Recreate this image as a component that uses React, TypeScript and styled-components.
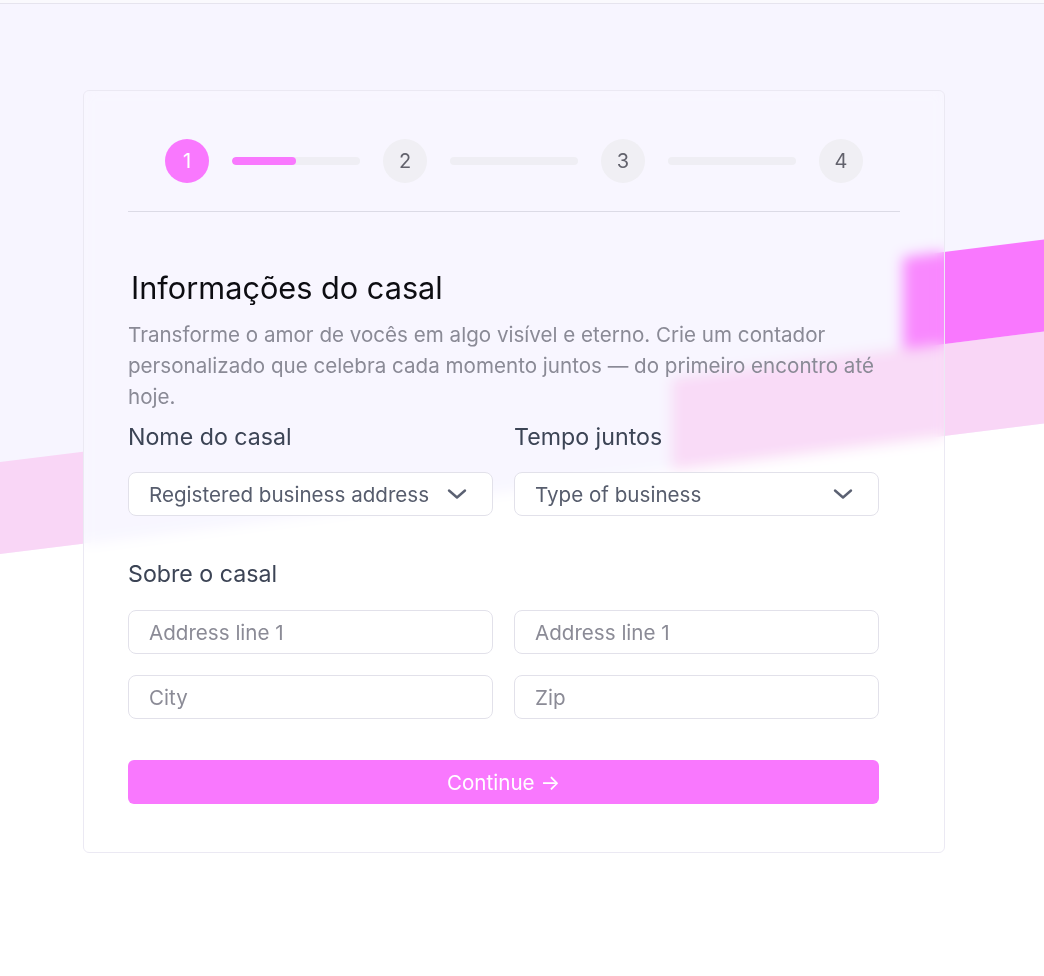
import React from "react";
import styled, { createGlobalStyle } from "styled-components";

const Global = createGlobalStyle`
  html, body { margin: 0; padding: 0; background: #ffffff; }
  body { font-family: Inter, "Noto Sans", sans-serif; }
  * { box-sizing: border-box; }
`;

const Page = styled.div`
  position: relative;
  width: 1044px;
  height: 976px;
  overflow: hidden;
`;

const Backdrop = styled.svg`
  position: absolute;
  inset: 0;
  width: 1044px;
  height: 976px;
  z-index: 0;
`;

const TopBar = styled.div`
  position: relative;
  z-index: 1;
  height: 4px;
  background: #faf9fd;
  border-bottom: 1px solid #e6e4ee;
`;

const Main = styled.main`
  position: relative;
  z-index: 1;
  display: flex;
  justify-content: flex-start;
  padding: 86px 0 0 83px;
`;

const Card = styled.section`
  width: 862px;
  height: 763px;
  border: 1px solid #ebe9f3;
  border-radius: 6px;
  background: rgba(255, 255, 255, 0.12);
  backdrop-filter: blur(7px);
  padding: 48px 44px 0 44px;
  display: flex;
  flex-direction: column;
`;

const Stepper = styled.div`
  display: flex;
  align-items: center;
  justify-content: center;
  gap: 23px;
  padding-bottom: 28px;
  border-bottom: 1px solid #dcdbe6;
`;

const StepDot = styled.div<{ $active?: boolean }>`
  width: 44px;
  height: 44px;
  border-radius: 50%;
  display: flex;
  align-items: center;
  justify-content: center;
  font-size: 20px;
  background: ${(p) => (p.$active ? "#f978fe" : "#f0eff4")};
  color: ${(p) => (p.$active ? "#ffffff" : "#62626c")};
`;

const Track = styled.div`
  width: 128px;
  height: 8px;
  border-radius: 4px;
  background: #efeef4;
  overflow: hidden;
`;

const Fill = styled.div`
  height: 100%;
  border-radius: 4px;
  background: #f978fe;
`;

const Title = styled.h1`
  margin: 58px 0 0 3px;
  font-size: 30.7px;
  line-height: 36px;
  font-weight: 400;
  color: #0d0d12;
`;

const Desc = styled.p`
  margin: 13px 0 0 0;
  font-size: 20.6px;
  line-height: 31px;
  color: #8a8a96;
  width: 760px;
`;

const Form = styled.div`
  width: 751px;
  display: flex;
  flex-direction: column;
`;

const Grid = styled.div<{ $top?: number }>`
  display: grid;
  grid-template-columns: 365px 365px;
  column-gap: 21px;
  row-gap: 21px;
  margin-top: ${(p) => p.$top ?? 0}px;
`;

const Field = styled.div`
  display: flex;
  flex-direction: column;
  gap: 21px;
`;

const Label = styled.label<{ $top: number }>`
  display: block;
  margin-top: ${(p) => p.$top}px;
  font-size: 23.2px;
  line-height: 28px;
  color: #3c4455;
`;

const Select = styled.div`
  height: 44px;
  border: 1px solid #e2e1ea;
  border-radius: 8px;
  background: #ffffff;
  display: flex;
  align-items: center;
  justify-content: space-between;
  padding: 0 25px 0 20px;
  font-size: 20.6px;
  color: #575d6d;
`;

const Input = styled.div`
  height: 44px;
  border: 1px solid #e2e1ea;
  border-radius: 8px;
  background: #ffffff;
  display: flex;
  align-items: center;
  padding: 0 20px;
  font-size: 20.6px;
  color: #8b8b96;
`;

const Button = styled.button`
  margin-top: 41px;
  height: 44px;
  border: none;
  border-radius: 6px;
  background: #f978fe;
  color: #ffffff;
  font-family: inherit;
  font-size: 20.6px;
  display: flex;
  align-items: center;
  justify-content: center;
`;

const ChevronSvg = styled.svg`
  width: 20px;
  height: 12px;
  flex: none;
`;

function Chevron() {
  return (
    <ChevronSvg viewBox="0 0 20 12" aria-hidden>
      <polyline
        points="2,2.5 10,9.5 18,2.5"
        fill="none"
        stroke="#5b6172"
        strokeWidth="2.4"
        strokeLinecap="round"
        strokeLinejoin="round"
      />
    </ChevronSvg>
  );
}

const y = (base: number, x: number) => base - 0.125 * x;

function Background() {
  const lavTop = 462;
  const lavBot = 554;
  const pts = (xs: number[], topBase: number, botBase: number) =>
    `${xs[0]},${y(topBase, xs[0])} ${xs[1]},${y(topBase, xs[1])} ${xs[1]},${y(botBase, xs[1])} ${xs[0]},${y(botBase, xs[0])}`;
  return (
    <Backdrop viewBox="0 0 1044 976" aria-hidden>
      <rect x="0" y="0" width="1044" height="976" fill="#ffffff" />
      <polygon points={`0,0 1044,0 1044,${y(lavBot, 1044)} 0,${lavBot}`} fill="#f7f5ff" />
      <polygon points={pts([0, 83], lavTop, lavBot)} fill="#f9d6f6" />
      <polygon points={pts([672, 1044], lavTop, lavBot)} fill="#f9d6f6" />
      <polygon points={pts([903, 1044], 370, lavTop)} fill="#f978fe" />
    </Backdrop>
  );
}

export default function App() {
  return (
    <Page>
      <Global />
      <Background />
      <TopBar />
      <Main>
        <Card>
          <Stepper>
            <StepDot $active>1</StepDot>
            <Track>
              <Fill style={{ width: "50%" }} />
            </Track>
            <StepDot>2</StepDot>
            <Track />
            <StepDot>3</StepDot>
            <Track />
            <StepDot>4</StepDot>
          </Stepper>
          <Title>Informações do casal</Title>
          <Desc>
            Transforme o amor de vocês em algo visível e eterno. Crie um contador personalizado que
            celebra cada momento juntos — do primeiro encontro até hoje.
          </Desc>
          <Form>
            <Grid>
              <Field>
                <Label $top={11}>Nome do casal</Label>
                <Select>
                  Registered business address
                  <Chevron />
                </Select>
              </Field>
              <Field>
                <Label $top={11}>Tempo juntos</Label>
                <Select>
                  Type of business
                  <Chevron />
                </Select>
              </Field>
            </Grid>
            <Label $top={44}>Sobre o casal</Label>
            <Grid $top={22}>
              <Input>Address line 1</Input>
              <Input>Address line 1</Input>
              <Input>City</Input>
              <Input>Zip</Input>
            </Grid>
            <Button>Continue →</Button>
          </Form>
        </Card>
      </Main>
    </Page>
  );
}
